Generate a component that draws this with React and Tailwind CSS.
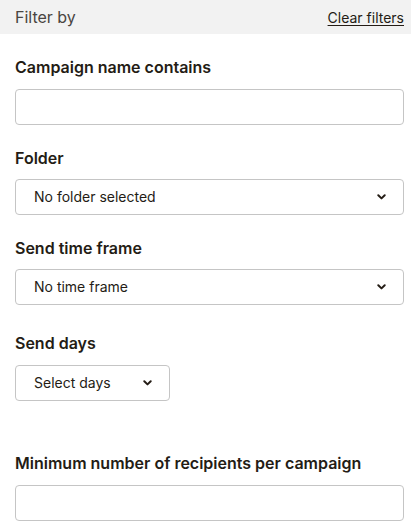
import React from "react";

const font = { fontFamily: "Inter, 'Liberation Sans', sans-serif" };

function Chevron() {
  return (
    <svg width="9" height="6" viewBox="0 0 9 6" className="shrink-0">
      <path d="M1.3 1.3 L4.5 4.4 L7.7 1.3" fill="none" stroke="#241c15" strokeWidth="2" strokeLinecap="round" strokeLinejoin="round" />
    </svg>
  );
}

function Label({ children, className = "" }) {
  return (
    <div className={"text-[16px] leading-[24px] font-semibold text-[#241c15] " + className}>{children}</div>
  );
}

function Input() {
  return <div className="h-[36px] w-full rounded-[4px] border border-[#c5c5c5] bg-white" />;
}

function Select({ text, className = "w-full" }) {
  return (
    <div className={"h-[36px] rounded-[4px] border border-[#c5c5c5] bg-white flex items-center justify-between pl-[18px] pr-[17px] " + className}>
      <span className="text-[14px] leading-[20px] text-[#241c15]">{text}</span>
      <Chevron />
    </div>
  );
}

export default function App() {
  return (
    <div className="w-[411px] h-[528px] bg-white overflow-hidden" style={font}>
      <div className="h-[34px] bg-[#f2f2f2] flex items-center justify-between px-[15px] pr-[7px]">
        <span className="text-[16px] text-[#4a4541]">Filter by</span>
        <span className="text-[14px] text-[#241c15] underline underline-offset-2">Clear filters</span>
      </div>
      <div className="px-[15px] pr-[7px] flex flex-col">
        <Label className="mt-[21px] mb-[10px]">Campaign name contains</Label>
        <Input />
        <Label className="mt-[21px] mb-[9px]">Folder</Label>
        <Select text="No folder selected" />
        <Label className="mt-[21px] mb-[9px]">Send time frame</Label>
        <Select text="No time frame" />
        <Label className="mt-[26px] mb-[10px]">Send days</Label>
        <Select text="Select days" className="w-[155px]" />
        <Label className="mt-[50px] mb-[10px]">Minimum number of recipients per campaign</Label>
        <Input />
      </div>
    </div>
  );
}
